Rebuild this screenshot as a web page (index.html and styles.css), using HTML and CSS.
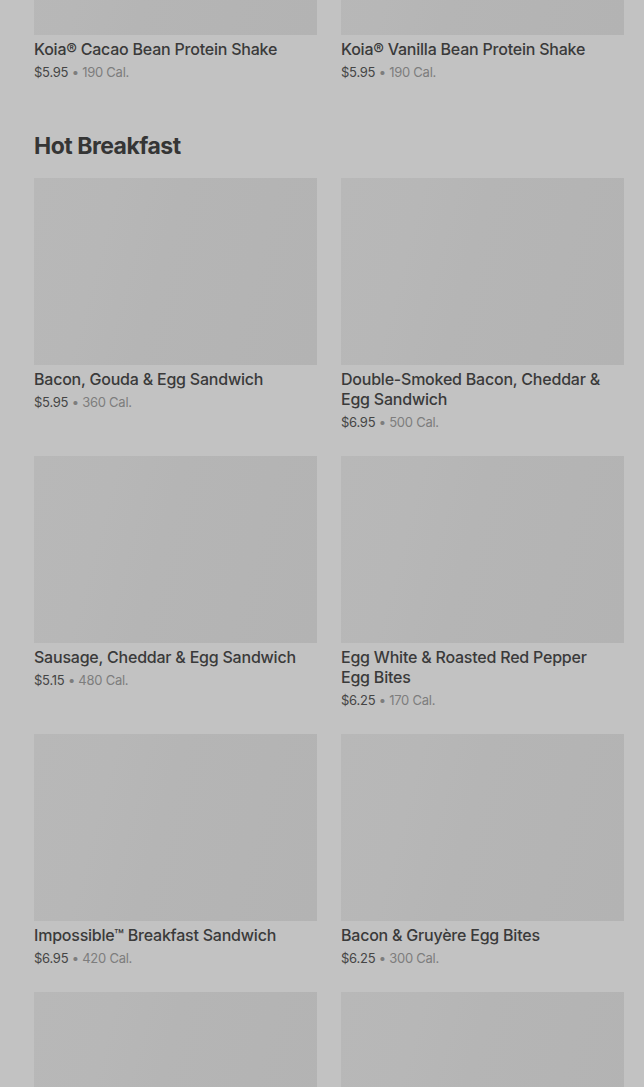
FILE: index.html
```html
<!DOCTYPE html>
<html lang="en">
<head>
<meta charset="utf-8">
<title>Menu</title>
<link rel="stylesheet" href="styles.css">
</head>
<body>
<main class="page">
  <section class="section">
    <div class="grid">
      <div class="card">
        <div class="thumb"></div>
        <div class="name">Koia® Cacao Bean Protein Shake</div>
        <div class="meta"><span class="price">$5.95</span><span class="cal"> • 190 Cal.</span></div>
      </div>
      <div class="card">
        <div class="thumb"></div>
        <div class="name">Koia® Vanilla Bean Protein Shake</div>
        <div class="meta"><span class="price">$5.95</span><span class="cal"> • 190 Cal.</span></div>
      </div>
    </div>
  </section>

  <section class="section">
    <h2 class="heading">Hot Breakfast</h2>
    <div class="grid">
      <div class="card">
        <div class="thumb"></div>
        <div class="name">Bacon, Gouda &amp; Egg Sandwich</div>
        <div class="meta"><span class="price">$5.95</span><span class="cal"> • 360 Cal.</span></div>
      </div>
      <div class="card">
        <div class="thumb"></div>
        <div class="name">Double-Smoked Bacon, Cheddar &amp; Egg Sandwich</div>
        <div class="meta"><span class="price">$6.95</span><span class="cal"> • 500 Cal.</span></div>
      </div>
      <div class="card">
        <div class="thumb"></div>
        <div class="name">Sausage, Cheddar &amp; Egg Sandwich</div>
        <div class="meta"><span class="price">$5.15</span><span class="cal"> • 480 Cal.</span></div>
      </div>
      <div class="card">
        <div class="thumb"></div>
        <div class="name">Egg White &amp; Roasted Red Pepper Egg Bites</div>
        <div class="meta"><span class="price">$6.25</span><span class="cal"> • 170 Cal.</span></div>
      </div>
      <div class="card">
        <div class="thumb"></div>
        <div class="name">Impossible™ Breakfast Sandwich</div>
        <div class="meta"><span class="price">$6.95</span><span class="cal"> • 420 Cal.</span></div>
      </div>
      <div class="card">
        <div class="thumb"></div>
        <div class="name">Bacon &amp; Gruyère Egg Bites</div>
        <div class="meta"><span class="price">$6.25</span><span class="cal"> • 300 Cal.</span></div>
      </div>
      <div class="card">
        <div class="thumb"></div>
      </div>
      <div class="card">
        <div class="thumb"></div>
      </div>
    </div>
  </section>
</main>
</body>
</html>
```

FILE: styles.css
```css
html, body {
  margin: 0;
  padding: 0;
  background: #c2c2c2;
  overflow: hidden;
}

.page {
  margin-top: -152px;
  padding: 0 20px 0 34px;
  font-family: Inter, "Noto Sans", "Liberation Sans", sans-serif;
}

.section {
  margin-bottom: 49px;
}

.heading {
  margin: 0 0 16px;
  font-size: 23px;
  line-height: 32px;
  font-weight: 700;
  color: #353535;
  letter-spacing: -0.5px;
}

.grid {
  display: grid;
  grid-template-columns: 283px 283px;
  column-gap: 24px;
  row-gap: 25px;
}

.card {
  display: flex;
  flex-direction: column;
}

.thumb {
  height: 187px;
  background: linear-gradient(105deg, #b8b8b8 0%, #b7b7b7 25%, #b5b5b5 45%, #b3b3b3 100%);
}

.name {
  margin-top: 4px;
  padding-right: 8px;
  font-size: 16px;
  line-height: 20px;
  font-weight: 500;
  color: #3a3a3a;
  letter-spacing: -0.22px;
}

.meta {
  margin-top: 4px;
  font-size: 13px;
  line-height: 18px;
  letter-spacing: -0.25px;
}

.price {
  color: #454545;
}

.cal {
  color: #7d7d7d;
}
```
